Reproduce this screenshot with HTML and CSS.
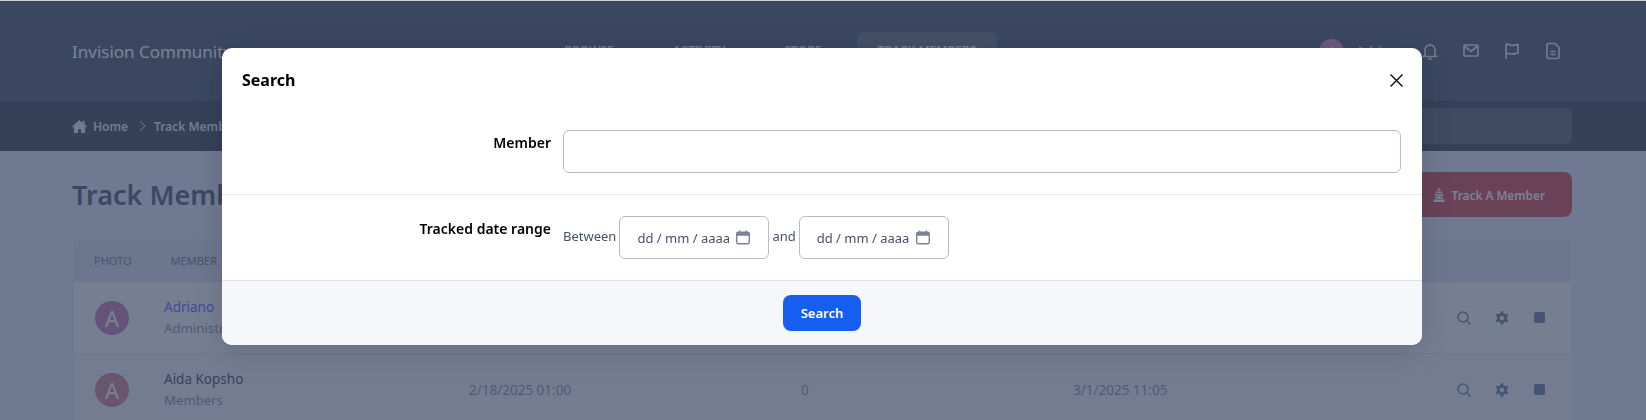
FILE: index.html
```html
<!DOCTYPE html>
<html>
<head>
    <title>Track Members</title>
    <link rel="stylesheet" href="styles.css">
</head>
<body>
    <!-- Page behind the dialog -->
    <header class="top-bar">
        <div class="logo">Invision Community</div>
        <nav class="main-nav">
            <a class="nav-item">Browse</a>
            <a class="nav-item">Activity</a>
            <a class="nav-item">Store</a>
            <a class="nav-item active">Track Members</a>
        </nav>
        <div class="user-area">
            <span class="user-avatar">A</span>
            <span class="user-name">Adriano</span>
            <svg class="top-icon" viewBox="0 0 16 18"><path d="M8 1.500v1.200M3 13V8a5 5 0 0 1 10 0v5l1.500 1.500h-13zM6.500 16.800h3"/></svg>
            <svg class="top-icon" viewBox="0 0 16 18"><rect x="1" y="3" width="14" height="11" rx="1"/><path d="M1.500 4l6.500 5.500L14.500 4"/></svg>
            <svg class="top-icon" viewBox="0 0 16 18"><path d="M2 17V2.500c3-1.500 4.500 1 6 1s3-.5 6-1v8.500c-3 .5-4.500 1-6 1s-3-1.500-6 0"/></svg>
            <svg class="top-icon" viewBox="0 0 16 18"><path d="M3 1.500h7l4 4V15a1.500 1.500 0 0 1-1.500 1.500h-9A1.500 1.500 0 0 1 2 15V3a1.500 1.500 0 0 1 1-1.500zM5.500 9.500h5M5.500 12.500h5"/></svg>
        </div>
    </header>

    <div class="crumb-bar">
        <svg class="home-icon" viewBox="0 0 16 14"><path d="M8 0L0 7l1 1 1-.8V14h4.500v-4h3v4H14V7.200l1 .8 1-1-2.500-2.200V1H11v2.600z"/></svg>
        <span class="crumb">Home</span>
        <svg class="crumb-sep" viewBox="0 0 7 12"><path d="M1 1l5 5-5 5"/></svg>
        <span class="crumb">Track Members</span>
        <div class="crumb-search"></div>
    </div>

    <main class="content">
        <div class="page-head">
            <h1>Track Members</h1>
            <a class="track-btn">
                <svg viewBox="0 0 12 14"><path d="M6 0l2 2.500H4zM3 3.500h6v1.500H3zM1.500 6h9v1.500h-9zM2.500 8h2v3h-2zM5 8h2v3H5zM7.500 8h2v3h-2zM.5 11.500h11V14H.5z"/></svg>
                Track A Member
            </a>
        </div>

        <div class="member-table">
            <div class="table-head">
                <span>Photo</span>
                <span>Member</span>
            </div>
            <div class="table-row first">
                <span class="avatar purple">A</span>
                <div class="member">
                    <a class="member-link">Adriano</a>
                    <span class="member-group">Administrators</span>
                </div>
                <span></span>
                <span></span>
                <span></span>
                <div class="actions">
                    <svg viewBox="0 0 14 14"><circle cx="6" cy="6" r="5"/><path d="M9.500 9.500L13.500 13.500"/></svg>
                    <svg class="gear" viewBox="0 0 14 14"><circle cx="7" cy="7" r="3.600"/><path d="M7 .3v3M7 10.700v3M1.200 3.650l2.600 1.500M10.200 8.850l2.600 1.500M12.800 3.650l-2.600 1.500M3.800 8.850l-2.600 1.500"/></svg>
                    <span class="stop"></span>
                </div>
            </div>
            <div class="table-row">
                <span class="avatar rose">A</span>
                <div class="member">
                    <span class="member-name">Aida Kopsho</span>
                    <span class="member-group">Members</span>
                </div>
                <span class="cell">2/18/2025 01:00</span>
                <span class="cell">0</span>
                <span class="cell">3/1/2025 11:05</span>
                <div class="actions">
                    <svg viewBox="0 0 14 14"><circle cx="6" cy="6" r="5"/><path d="M9.500 9.500L13.500 13.500"/></svg>
                    <svg class="gear" viewBox="0 0 14 14"><circle cx="7" cy="7" r="3.600"/><path d="M7 .3v3M7 10.700v3M1.200 3.650l2.600 1.500M10.200 8.850l2.600 1.500M12.800 3.650l-2.600 1.500M3.800 8.850l-2.600 1.500"/></svg>
                    <span class="stop"></span>
                </div>
            </div>
        </div>
    </main>

    <div class="backdrop"></div>

    <!-- Search dialog -->
    <div class="modal">
        <div class="modal-head">
            <h2>Search</h2>
            <svg class="close-icon" viewBox="0 0 13 13"><path d="M.5.5l12 12M12.500.5l-12 12"/></svg>
        </div>
        <div class="form-row member-row">
            <label>Member</label>
            <input type="text" class="text-input">
        </div>
        <div class="form-row">
            <label>Tracked date range</label>
            <div class="date-range">
                <span>Between</span>
                <div class="date-input">
                    dd / mm / aaaa
                    <svg viewBox="0 0 14 14"><rect x=".7" y="1.700" width="12.600" height="11.600" rx="1.500"/><path class="cal-top" d="M.7 3.200a1.500 1.500 0 0 1 1.500-1.500h9.600a1.500 1.500 0 0 1 1.500 1.500v2H.7zM3 0h1.400v2H3zM9.600 0H11v2H9.600z"/></svg>
                </div>
                <span>and</span>
                <div class="date-input">
                    dd / mm / aaaa
                    <svg viewBox="0 0 14 14"><rect x=".7" y="1.700" width="12.600" height="11.600" rx="1.500"/><path class="cal-top" d="M.7 3.200a1.500 1.500 0 0 1 1.500-1.500h9.600a1.500 1.500 0 0 1 1.500 1.500v2H.7zM3 0h1.400v2H3zM9.600 0H11v2H9.600z"/></svg>
                </div>
            </div>
        </div>
        <div class="modal-foot">
            <button class="search-btn">Search</button>
        </div>
    </div>
</body>
</html>
```

FILE: styles.css
```css
html, body {
    height: 100%;
    margin: 0;
    padding: 0;
    overflow: hidden;
}

body {
    font-family: "Noto Sans", sans-serif;
    font-size: 14px;
    background: #e0e8f4;
    color: #3f4761;
}

h1, h2 {
    margin: 0;
}

/* top bar */
.top-bar {
    height: 101px;
    box-sizing: border-box;
    padding: 1px 74px 0 72px;
    background: #4a5b6a;
    display: flex;
    align-items: center;
}
.logo {
    width: 471px;
    font-size: 17px;
    color: #fff;
}
.main-nav {
    display: flex;
    align-items: flex-start;
    height: 38px;
    margin-top: 31px;
    align-self: flex-start;
}
.nav-item {
    padding: 10px 21px 0;
    font-size: 12px;
    font-weight: 600;
    text-transform: uppercase;
    color: #dfedf0;
    margin-right: 17px;
}
.nav-item.active {
    height: 38px;
    box-sizing: border-box;
    margin-left: -3px;
    background: #647278;
    border-radius: 6px;
    color: #fff;
}
.user-area {
    margin-left: auto;
    display: flex;
    align-items: center;
}
.user-avatar {
    width: 25px;
    height: 25px;
    border-radius: 50%;
    background: #df89c2;
    color: #fff;
    font-size: 14px;
    text-align: center;
    line-height: 25px;
}
.user-name {
    width: 66px;
    margin-left: 12px;
    font-size: 13px;
    font-weight: 600;
    color: #dfedf0;
}
.top-icon {
    width: 16px;
    height: 18px;
    margin-right: 25px;
    fill: none;
    stroke: #dfedf0;
    stroke-width: 1.700;
}
.top-icon:last-child {
    margin-right: 11px;
}

/* breadcrumb */
.crumb-bar {
    height: 50px;
    padding: 0 74px 0 72px;
    background: #394753;
    display: flex;
    align-items: center;
}
.home-icon {
    width: 15px;
    height: 13px;
    margin-right: 6px;
    fill: #dfedf0;
}
.crumb {
    font-size: 12px;
    font-weight: 600;
    color: #dfedf0;
}
.crumb-sep {
    width: 7px;
    height: 12px;
    margin: 0 8px 0 11px;
    fill: none;
    stroke: #dfedf0;
}
.crumb-search {
    margin-left: auto;
    width: 300px;
    height: 36px;
    background: #53646f;
    border-radius: 6px;
}

/* page content */
.content {
    padding: 21px 74px 0 72px;
}
.page-head {
    height: 45px;
    display: flex;
    justify-content: space-between;
    align-items: center;
}
.page-head h1 {
    font-size: 27px;
    font-weight: 600;
    color: #4a5a70;
}
.track-btn {
    height: 45px;
    padding: 0 27px;
    display: flex;
    align-items: center;
    gap: 7px;
    background: #cf4a50;
    border-radius: 8px;
    color: #fff;
    font-size: 11.800px;
    font-weight: 600;
}
.track-btn svg {
    width: 12px;
    height: 14px;
    fill: #fff;
}
.member-table {
    margin: 22px 0 0 1px;
    border: 1px solid #dfe5ec;
    border-radius: 6px 6px 0 0;
}
.table-head {
    height: 41px;
    padding-left: 20px;
    display: flex;
    align-items: center;
    gap: 39px;
    background: #d6e0ea;
    font-size: 11px;
    text-transform: uppercase;
    color: #6f7c93;
}
.table-row {
    height: 72px;
    box-sizing: border-box;
    padding-left: 21px;
    display: grid;
    grid-template-columns: 69px 305px 332px 272px 384px auto;
    align-items: center;
    background: #eef0f3;
    border-top: 1px solid #e0e3ea;
}
.table-row.first {
    background: #f4f5f6;
}
.avatar {
    width: 34px;
    height: 34px;
    border-radius: 50%;
    color: #fff;
    font-size: 22px;
    line-height: 34px;
    text-align: center;
}
.avatar.purple {
    background: #c07fb0;
}
.avatar.rose {
    background: #d0808f;
}
.member {
    display: flex;
    flex-direction: column;
    gap: 2px;
    font-size: 13.500px;
    line-height: 19px;
}
.member-link {
    color: #5667ff;
}
.member-name {
    color: #3f4761;
}
.member-group {
    font-size: 13.200px;
    color: #838fa6;
}
.cell {
    font-size: 13.500px;
    color: #838fa6;
}
.actions {
    display: flex;
    align-items: center;
    gap: 24px;
}
.actions svg {
    width: 14px;
    height: 14px;
    fill: none;
    stroke: #6a7e9d;
    stroke-width: 1.500;
}
.actions svg.gear {
    stroke-width: 2.600;
}
.stop {
    width: 11px;
    height: 11px;
    margin-left: 1px;
    background: #6a7e9d;
    border-radius: 2px;
}

/* dim layer */
.backdrop {
    position: fixed;
    inset: 0;
    background: rgba(51, 62, 92, 0.65);
    border-top: 1px solid #cfcfcf;
}

/* dialog */
.modal {
    position: fixed;
    top: 48px;
    left: 222px;
    width: 1200px;
    background: #fff;
    border-radius: 10px;
    box-shadow: 0 5px 30px rgba(0, 0, 0, 0.15);
    color: #000;
    overflow: hidden;
}
.modal-head {
    height: 60px;
    padding: 4px 19px 0 20px;
    box-sizing: border-box;
    display: flex;
    justify-content: space-between;
    align-items: center;
}
.modal-head h2 {
    font-size: 16px;
    font-weight: 700;
}
.close-icon {
    width: 13px;
    height: 13px;
    fill: none;
    stroke: #000;
    stroke-width: 1.300;
}
.form-row {
    display: grid;
    grid-template-columns: 329px 1fr;
    column-gap: 12px;
    padding: 21px 21px 21px 0;
}
.member-row {
    padding-top: 22px;
    border-bottom: 1px solid #e7e8ee;
}
.form-row label {
    text-align: right;
    font-weight: 600;
    line-height: 26px;
}
.text-input {
    height: 43px;
    box-sizing: border-box;
    border: 1px solid #b7bccd;
    border-radius: 6px;
    display: block;
    width: 100%;
}
.date-range {
    display: flex;
    align-items: center;
    gap: 3px;
    font-size: 13px;
    color: #46506e;
}
.date-range > span {
    margin-top: -4px;
}
.date-input {
    width: 150px;
    height: 43px;
    box-sizing: border-box;
    border: 1px solid #b7bccd;
    border-radius: 6px;
    padding: 0 18px 0 17px;
    display: flex;
    justify-content: space-between;
    align-items: center;
}
.date-input svg {
    width: 14px;
    height: 15px;
    fill: none;
    stroke: #7b8398;
    stroke-width: 1.400;
}
.date-input .cal-top {
    fill: #7b8398;
    stroke: none;
}
.modal-foot {
    height: 65px;
    box-sizing: border-box;
    padding-top: 14px;
    background: #f6f7fb;
    border-top: 1px solid #dce0ec;
    text-align: center;
}
.search-btn {
    width: 78px;
    height: 36px;
    border: 0;
    border-radius: 8px;
    background: #155eef;
    color: #fff;
    font-family: "Noto Sans", sans-serif;
    font-size: 13px;
    font-weight: 600;
}
```
